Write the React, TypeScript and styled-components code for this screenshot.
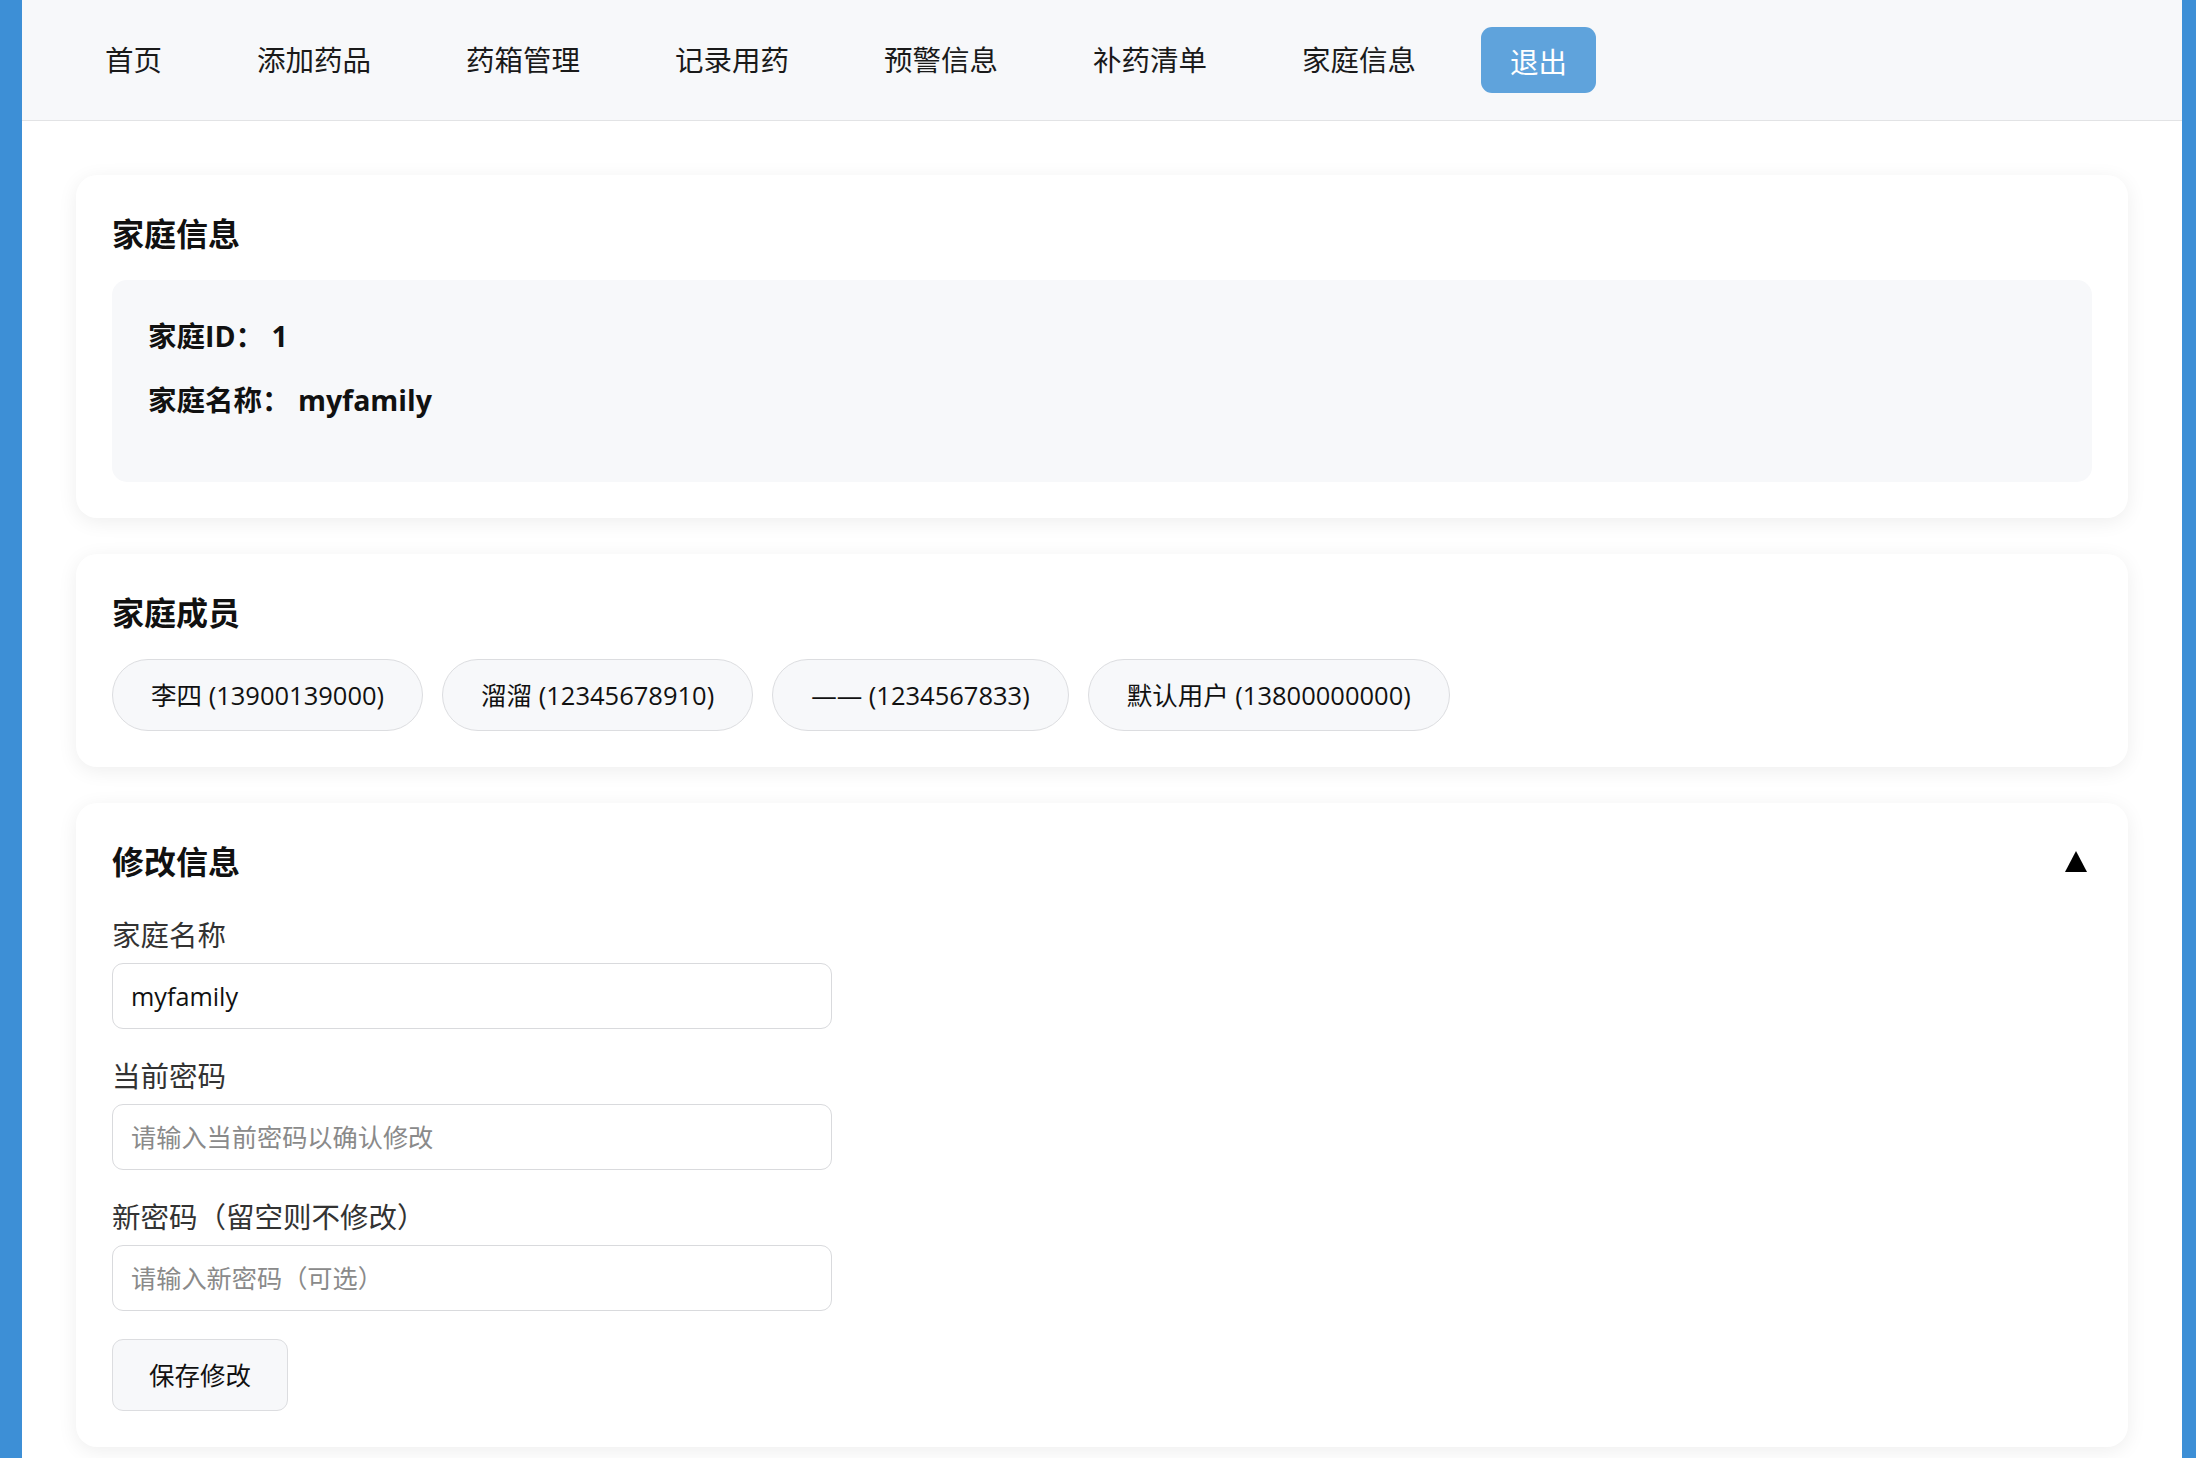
import { useState } from "react";
import styled, { createGlobalStyle } from "styled-components";

const GlobalStyle = createGlobalStyle`
  * {
    box-sizing: border-box;
  }
  body {
    margin: 0;
    background: #3d8fd6;
    font-family: "Open Sans", "Noto Sans CJK SC", sans-serif;
    color: #111;
  }
`;

const navItems = ["首页", "添加药品", "药箱管理", "记录用药", "预警信息", "补药清单", "家庭信息"];

const family = {
  id: 1,
  name: "myfamily",
  members: [
    { name: "李四", phone: "13900139000" },
    { name: "溜溜", phone: "12345678910" },
    { name: "——", phone: "1234567833" },
    { name: "默认用户", phone: "13800000000" },
  ],
};

const Page = styled.div`
  margin: 0 14px 0 22px;
  min-height: 100vh;
  background: #fff;
`;

const Nav = styled.nav`
  height: 121px;
  display: flex;
  align-items: center;
  gap: 35px;
  padding-left: 53px;
  background: #f7f8fa;
  border-bottom: 1px solid #e2e3e5;
`;

const NavLink = styled.a`
  padding: 0 30px;
  font-size: 28.5px;
  line-height: 1.5;
  color: #1a1a1a;
  text-decoration: none;
  cursor: pointer;
`;

const LogoutButton = styled.button`
  height: 66px;
  padding: 0 29px;
  border: none;
  border-radius: 11px;
  background: #5fa3dc;
  color: #fff;
  font-family: inherit;
  font-size: 28.5px;
  cursor: pointer;
`;

const Main = styled.main`
  display: flex;
  flex-direction: column;
  gap: 36px;
  padding: 54px 54px 55px;
`;

const Card = styled.section`
  padding: 36px;
  background: #fff;
  border-radius: 21px;
  box-shadow: 0 4px 20px rgba(0, 0, 0, 0.07);
`;

const CardHeader = styled.div<{ $gap?: number }>`
  display: flex;
  align-items: center;
  justify-content: space-between;
  margin-bottom: ${(p) => p.$gap ?? 24}px;
`;

const CardTitle = styled.h2`
  margin: 0;
  font-size: 32px;
  line-height: 45px;
  font-weight: 700;
  color: #111;
`;

const ToggleButton = styled.button`
  display: flex;
  padding: 0 5px 0 0;
  border: none;
  background: none;
  cursor: pointer;
`;

const InfoBox = styled.div`
  padding: 36px 36px 38px;
  background: #f7f8fa;
  border-radius: 15px;
`;

const InfoLine = styled.p`
  margin: 0 0 24px;
  font-size: 28.5px;
  line-height: 40px;
  font-weight: 700;
`;

const ChipRow = styled.div`
  display: flex;
  flex-wrap: wrap;
  gap: 19px;
`;

const Chip = styled.span`
  padding: 16px 38px;
  font-size: 25.5px;
  line-height: 38px;
  background: #f7f8fa;
  border: 1px solid #dcdde0;
  border-radius: 999px;
  color: #111;
`;

const Field = styled.div`
  display: flex;
  flex-direction: column;
  margin-bottom: 26px;
`;

const Label = styled.label`
  margin-bottom: 7px;
  font-size: 28.5px;
  line-height: 42px;
  color: #333;
`;

const Input = styled.input`
  width: 720px;
  height: 66px;
  padding: 0 18px;
  border: 1px solid #d9dadd;
  border-radius: 11px;
  font-family: inherit;
  font-size: 25.2px;
  color: #111;
  outline: none;

  &::placeholder {
    color: #8a8a8a;
  }
`;

const SaveButton = styled.button`
  margin-top: 2px;
  padding: 16px 36px;
  font-family: inherit;
  font-size: 25.5px;
  line-height: 38px;
  color: #111;
  background: #f7f8fa;
  border: 1px solid #dcdde0;
  border-radius: 11px;
  cursor: pointer;
`;

function App() {
  const [open, setOpen] = useState(true);
  const [name, setName] = useState(family.name);

  return (
    <>
      <GlobalStyle />
      <Page>
        <Nav>
          {navItems.map((item) => (
            <NavLink key={item}>{item}</NavLink>
          ))}
          <LogoutButton>退出</LogoutButton>
        </Nav>
        <Main>
          <Card>
            <CardHeader>
              <CardTitle>家庭信息</CardTitle>
            </CardHeader>
            <InfoBox>
              <InfoLine>家庭ID： {family.id}</InfoLine>
              <InfoLine>家庭名称： {family.name}</InfoLine>
            </InfoBox>
          </Card>

          <Card>
            <CardHeader>
              <CardTitle>家庭成员</CardTitle>
            </CardHeader>
            <ChipRow>
              {family.members.map((m) => (
                <Chip key={m.phone}>
                  {m.name} ({m.phone})
                </Chip>
              ))}
            </ChipRow>
          </Card>

          <Card>
            <CardHeader $gap={30}>
              <CardTitle>修改信息</CardTitle>
              <ToggleButton onClick={() => setOpen(!open)}>
                <svg width="22" height="21" viewBox="0 0 22 21">
                  <polygon points={open ? "11,0 22,21 0,21" : "0,0 22,0 11,21"} fill="#000" />
                </svg>
              </ToggleButton>
            </CardHeader>
            {open && (
              <form onSubmit={(e) => e.preventDefault()}>
                <Field>
                  <Label>家庭名称</Label>
                  <Input value={name} onChange={(e) => setName(e.target.value)} />
                </Field>
                <Field>
                  <Label>当前密码</Label>
                  <Input type="password" placeholder="请输入当前密码以确认修改" />
                </Field>
                <Field>
                  <Label>新密码（留空则不修改）</Label>
                  <Input type="password" placeholder="请输入新密码（可选）" />
                </Field>
                <SaveButton type="submit">保存修改</SaveButton>
              </form>
            )}
          </Card>
        </Main>
      </Page>
    </>
  );
}

export default App;
